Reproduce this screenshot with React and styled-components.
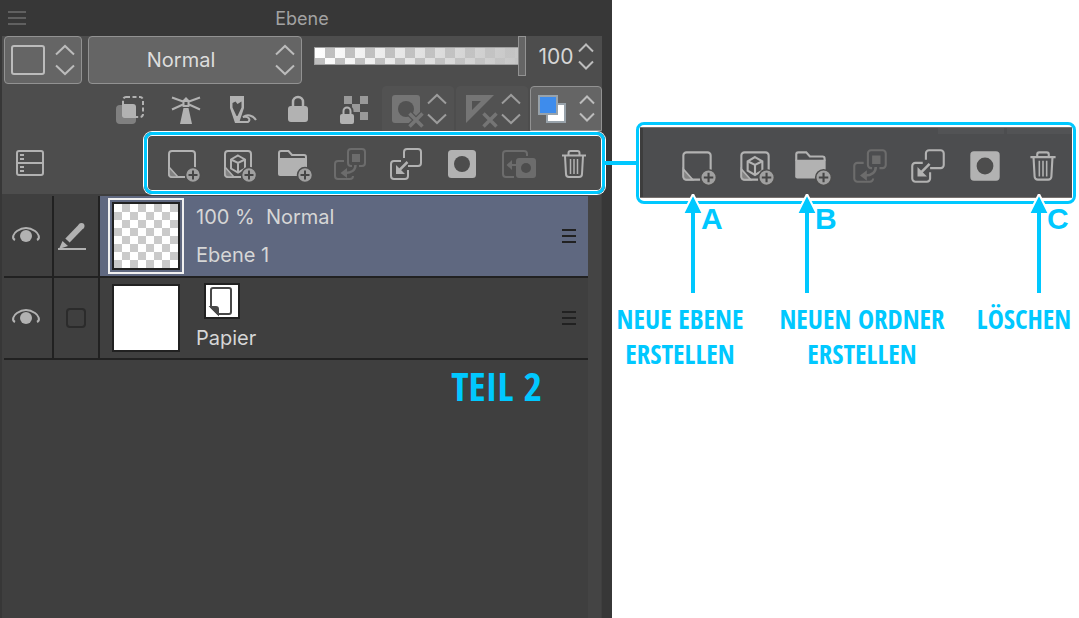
import styled, { createGlobalStyle, css } from 'styled-components';
import { useState } from 'react';

const cyan = '#00c8ff';
const iconLight = '#b2b2b2';
const iconDim = '#6c6c6c';
const iconOff = '#757575';
const toolbarBg = '#4d4d4d';

const GlobalStyle = createGlobalStyle`
    * {
        box-sizing: border-box;
    }
    body {
        margin: 0;
        background: #ffffff;
        font-family: Inter, "Liberation Sans", sans-serif;
    }
    button, select, input {
        font: inherit;
        color: inherit;
        margin: 0;
    }
`

const Page = styled.main`
    display: grid;
    grid-template-columns: minmax(0, 612fr) minmax(0, 467fr);
    min-height: 100vh;
`

/* ---------- layer panel ---------- */

const Panel = styled.section`
    display: flex;
    flex-direction: column;
    padding: 0 10px 0 2px;
    background: #373737;
    color: #d6d6d6;
`

const PanelHeader = styled.header`
    display: grid;
    grid-template-columns: 30px 1fr 30px;
    align-items: center;
    height: 36px;
`

const Title = styled.h1`
    margin: 0;
    font-size: 18px;
    font-weight: 400;
    text-align: center;
    color: #a2a2a2;
`

const PlainButton = styled.button`
    display: flex;
    align-items: center;
    justify-content: center;
    padding: 0;
    border: none;
    background: none;
`

const Toolbar = styled.div`
    background: ${toolbarBg};
`

const ControlRow = styled.div`
    display: flex;
    align-items: flex-start;
    gap: 6px;
    height: 50px;
    padding-left: 2px;
`

const raised = css`
    border: 1px solid #929292;
    border-radius: 4px;
    background: #656565;
`

const ShapeButton = styled.button`
    ${raised}
    display: flex;
    align-items: center;
    justify-content: space-between;
    width: 78px;
    height: 48px;
    padding: 0 6px;
`

const Swatch = styled.span`
    width: 34px;
    height: 30px;
    border: 2px solid #bcbcbc;
    border-radius: 3px;
`

const SelectBox = styled.label`
    position: relative;
    flex: 1;
    min-width: 120px;

    svg {
        position: absolute;
        top: 8px;
        right: 7px;
        pointer-events: none;
    }
`

const BlendSelect = styled.select`
    ${raised}
    appearance: none;
    display: block;
    width: 100%;
    height: 48px;
    padding: 0 28px 0 0;
    font-size: 20px;
    text-align: center;
    text-align-last: center;
    color: #dddddd;
`

const Opacity = styled.input`
    appearance: none;
    flex: none;
    width: 212px;
    height: 40px;
    margin-left: 6px;
    background: none;

    &::-webkit-slider-runnable-track {
        height: 18px;
        border: 1px solid #a0a0a0;
        border-right: none;
        background:
            linear-gradient(90deg, rgba(196, 196, 196, 0), #c4c4c4),
            conic-gradient(#bfbfbf 25%, #ffffff 0 50%, #bfbfbf 0 75%, #ffffff 0) 0 0 / 20px 20px;
    }

    &::-webkit-slider-thumb {
        appearance: none;
        width: 8px;
        height: 40px;
        margin-top: -12px;
        border: 1px solid #929292;
        background: #656565;
    }
`

const OpacityValue = styled.div`
    display: flex;
    align-items: center;
    gap: 2px;
    height: 40px;
    padding: 0 8px 0 4px;

    input {
        width: 40px;
        padding: 0;
        border: none;
        background: none;
        font-size: 21px;
        text-align: center;
    }
`

const ToolRow = styled.div`
    display: flex;
    justify-content: flex-end;
    align-items: center;
    height: 45px;
`

const Tool = styled(PlainButton)`
    width: 56px;
    height: 45px;
`

const ToolGroup = styled.button`
    display: flex;
    align-items: center;
    justify-content: space-between;
    width: 72px;
    height: 45px;
    margin-left: 2px;
    padding: 0 6px 0 3px;
    border: 1px solid #525252;
    border-radius: 4px 4px 0 0;
    background: #525252;

    ${({ $active }) => $active && css`
        border-color: #929292;
        background: #656565;
    `}
    &:nth-of-type(6) {
        margin-left: 0;
    }
`

const CommandRow = styled.div`
    display: flex;
    justify-content: space-between;
    align-items: center;
    height: 63px;
    padding: 1px 0 0 8px;
`

const Highlight = styled.div`
    position: relative;
    z-index: 1;
    display: flex;
    align-items: center;
    width: 461px;
    height: 62px;
    margin-right: -3px;
    padding: 2px 0 0 7px;
    border: 3px solid ${cyan};
    border-radius: 8px;
    box-shadow: 0 0 0 1px #ffffff, inset 0 0 0 1px #ffffff;

    /* line to the enlarged copy */
    &::after {
        content: '';
        position: absolute;
        top: 26px;
        left: 100%;
        width: 33px;
        height: 4px;
        margin-left: 3px;
        background: ${cyan};
    }
`

const Command = styled(PlainButton)`
    flex: 1;
    min-width: 0;
    height: 54px;
`

const ListArea = styled.div`
    flex: 1;
    display: flex;
`

const ScrollTrack = styled.div`
    width: 14px;
    background: #444444;
    border-right: 1px solid #3f3f3f;
`

const Layers = styled.div`
    flex: 1;
    min-width: 0;
    padding-top: 2px;
    background: #3f3f3f;
`

const LayerList = styled.ul`
    margin: 0 0 0 2px;
    padding: 0;
    list-style: none;
`

const Layer = styled.li`
    display: grid;
    grid-template-columns: 50px 46px 1fr;
    height: 82px;
    border-bottom: 2px solid #212121;
`

const Cell = styled.div`
    display: flex;
    align-items: center;
    justify-content: center;
    padding-right: 4px;
    border-right: 2px solid #212121;
`

const MarkCell = styled(Cell)`
    padding-right: 0;
`

const LayerBody = styled.div`
    display: flex;
    align-items: center;
    padding: 0 12px 0 8px;
    background: ${({ $selected }) => $selected ? '#5f6880' : 'none'};
`

const ThumbFrame = styled.div`
    padding: 2px;
    border: 2px solid ${({ $selected }) => $selected ? '#f0f0f0' : 'transparent'};
`

const Thumb = styled.div`
    width: 68px;
    height: 68px;
    border: 2px solid #212121;
    background: ${({ $transparent }) => $transparent
        ? 'conic-gradient(#cacaca 25%, #ffffff 0 50%, #cacaca 0 75%, #ffffff 0) 0 0 / 16px 16px'
        : '#ffffff'};
`

const LayerText = styled.div`
    flex: 1;
    padding-left: 12px;
    font-size: 20px;
    line-height: 38px;
    white-space: pre;
`

const PaperBadge = styled.div`
    display: flex;
    width: 36px;
    height: 36px;
    margin: 4px 0 0 8px;
    border: 2px solid #212121;
    background: #ffffff;
`

const LayerMark = styled.input`
    appearance: none;
    width: 20px;
    height: 20px;
    margin: 0;
    border: 2px solid #2b2b2b;
    border-radius: 4px;
`

const handwritten = css`
    margin: 0;
    color: ${cyan};
    font-family: "Open Sans Condensed", "Liberation Sans Narrow", "DejaVu Sans Condensed", sans-serif;
    font-weight: 700;
`

const PartLabel = styled.p`
    ${handwritten}
    padding: 4px 46px 0 0;
    font-size: 40px;
    line-height: 44px;
    text-align: right;
`

/* ---------- explanation ---------- */

const Notes = styled.section`
    padding: 122px 3px 0 24px;
`

const Callout = styled.div`
    padding: 2px 1px 3px 1px;
    border: 3px solid ${cyan};
    border-radius: 8px;
    background: #ffffff;
`

const CalloutBar = styled.div`
    display: flex;
    align-items: center;
    height: 71px;
    padding: 6px 0 0 28px;
    border: solid #77716f;
    border-width: 1px 0 1px 0;
    background:
        linear-gradient(#525355, #525355) right 68px top 0 / 66px 6px no-repeat,
        linear-gradient(#525355, #525355) right 0 top 0 / 65px 6px no-repeat,
        #4c4d4f;
    box-shadow: inset 3px 0 0 #3d3d3d;
`

const Arrows = styled.div`
    position: relative;
    display: grid;
    grid-template-columns: 114fr 232fr 48fr;
    margin-top: -10px;
    padding-left: 46px;
`

const Pointer = styled.div`
    display: flex;
    align-items: flex-start;
    color: ${cyan};
    font-family: "Liberation Sans", Arial, sans-serif;
    font-size: 30px;
    font-weight: 700;
    line-height: 30px;

    svg {
        flex: none;
    }
    span {
        margin: 10px 0 0 -3px;
    }
`

const Captions = styled.div`
    display: grid;
    grid-template-columns: 136fr 228fr 96fr;
    margin: 7px 4px 0 -24px;
`

const Caption = styled.p`
    ${handwritten}
    font-size: 27px;
    line-height: 35px;
    text-align: center;
    white-space: nowrap;
`

/* ---------- icons ---------- */

function Icon({ children, size = 40, color = iconLight }) {
    return (
        <svg width={size} height={size} viewBox="0 0 40 40" fill="none" stroke={color} strokeWidth="2" aria-hidden="true">
            {children}
        </svg>
    )
}

function Chevrons({ small, color = '#bcbcbc' }) {
    return (
        <svg width={small ? 16 : 20} height={small ? 29 : 32} viewBox={small ? '0 0 16 29' : '0 0 20 32'} fill="none" stroke={color} strokeWidth="2" aria-hidden="true">
            {small
                ? <path d="M1 9.5l7-7 7 7M1 19.5l7 7 7-7" />
                : <path d="M1 10.5l9-8.5 9 8.5M1 21.5l9 8.5 9-8.5" />}
        </svg>
    )
}

function Bars({ color, width = 14, height = 14 }) {
    const mid = height / 2
    return (
        <svg width={width} height={height} fill="none" stroke={color} strokeWidth="2" aria-hidden="true">
            <path d={`M0 1h${width}M0 ${mid}h${width}M0 ${height - 1}h${width}`} />
        </svg>
    )
}

const Plus = () => (
    <g>
        <circle cx="31" cy="31" r="7.5" fill="#a0a0a0" stroke={toolbarBg} strokeWidth="1.5" />
        <path d="M26.5 31h9M31 26.5v9" stroke="#454545" strokeWidth="2" />
    </g>
)

const Sheet = () => (
    <g>
        <path d="M33 24V10a3 3 0 0 0-3-3H10a3 3 0 0 0-3 3v20a3 3 0 0 0 3 3h13" />
        <path d="M7 23l9 10h-6a3 3 0 0 1-3-3z" fill="#828282" strokeWidth="1.5" />
    </g>
)

const Cross = () => (
    <g>
        <path d="M24 25l12 12M36 25L24 37" stroke="#525252" strokeWidth="6" />
        <path d="M23.5 24.5l13 13M36.5 24.5l-13 13" strokeWidth="3.5" />
    </g>
)

const Trash = () => (
    <g>
        <path d="M8 11.5h24M14.5 11V9a2 2 0 0 1 2-2h7a2 2 0 0 1 2 2v2M11 12l1 18a3 3 0 0 0 3 3h10a3 3 0 0 0 3-3l1-18" />
        <path d="M16.5 15v15M20 15v15M23.5 15v15" strokeWidth="1.5" />
    </g>
)

const commands = [
    { name: 'Neue Ebene', art: <><Sheet /><Plus /></> },
    {
        name: 'Neue 3D-Ebene',
        art: <>
            <Sheet />
            <path d="M20 11.5l7 4v9l-7 4-7-4v-9z" fill={toolbarBg} />
            <path d="M13 15.5l7 3.5 7-3.5M20 19v9" />
            <Plus />
        </>
    },
    {
        name: 'Neuer Ordner',
        art: <>
            <path d="M5 15V9a2 2 0 0 1 2-2h7.5l3.500 4h12a2 2 0 0 1 2 2v2" />
            <path d="M4 14h29v16a2 2 0 0 1-2 2H6a2 2 0 0 1-2-2z" fill={iconLight} stroke="none" />
            <Plus />
        </>
    },
    {
        name: 'Auf Ebene darunter übertragen',
        dim: true,
        art: <>
            <path d="M18 15V8a3 3 0 0 1 3-3h11a3 3 0 0 1 3 3v11a3 3 0 0 1-3 3h-3M18 14v5a3 3 0 0 0 3 3h1" />
            <path d="M14 17H8a3 3 0 0 0-3 3v12a3 3 0 0 0 3 3h12a3 3 0 0 0 3-3" />
            <path d="M22 10h8v8h-8zM10.5 29l6.500-5v10z" fill={iconDim} stroke="none" />
            <path d="M25.5 21c0 5-4 8-10 8" strokeWidth="2.5" />
        </>
    },
    {
        name: 'Mit Ebene darunter kombinieren',
        art: <>
            <path d="M18 14V8a3 3 0 0 1 3-3h11a3 3 0 0 1 3 3v11a3 3 0 0 1-3 3H22" />
            <path d="M15 17H8a3 3 0 0 0-3 3v12a3 3 0 0 0 3 3h11a3 3 0 0 0 3-3v-6" />
            <path d="M21.5 18L13 26.5" strokeWidth="2.5" />
            <path d="M10 21v9h9z" fill={iconLight} stroke="none" />
        </>
    },
    {
        name: 'Ebenenmaske',
        art: <>
            <rect x="6" y="6" width="28" height="28" rx="3.5" fill={iconLight} stroke="none" />
            <circle cx="20" cy="20" r="8" fill={toolbarBg} stroke="none" />
        </>
    },
    {
        name: 'Maske anwenden',
        dim: true,
        art: <>
            <path d="M29 12v-2a3 3 0 0 0-3-3H8a3 3 0 0 0-3 3v20a3 3 0 0 0 3 3h8M11 21h7" />
            <path d="M8.5 21l5.500-5v10z" fill={iconDim} stroke="none" />
            <rect x="18" y="14" width="20" height="20" rx="3" fill={iconDim} stroke="none" />
            <circle cx="28" cy="24" r="5" fill={toolbarBg} stroke="none" />
        </>
    },
    { name: 'Löschen', art: <Trash /> },
]

const tools = [
    {
        name: 'Clipping',
        art: <>
            <rect x="6" y="16" width="20" height="19" rx="4" fill="#808080" stroke="none" />
            <path d="M12 15h11a3 3 0 0 1 3 3v11H15a3 3 0 0 1-3-3z" fill={iconLight} stroke="none" />
            <rect x="13" y="8" width="20" height="20" rx="3" strokeDasharray="4 2.5" />
        </>
    },
    {
        name: 'Referenzebene',
        art: <>
            <path d="M6 8.5l11 4M6 20.5l11-5M34 8.5l-11 4M34 20.5l-11-5" />
            <path d="M17.5 12h5v5h-5z" />
            <path d="M17 11l3-3 3 3zM17.5 19h5L26 35H14z" fill={iconLight} stroke="none" />
        </>
    },
    {
        name: 'Entwurfsebene',
        art: <>
            <path d="M8 7h14v12l-5 15h-4L8 19z" fill={iconLight} stroke="none" />
            <path d="M10.5 14l3-1.500 2 2.500 4-2.500v6L15.500 27h-1l-4-8.500z" fill={toolbarBg} stroke="none" />
            <path d="M16 33h10c3-2 1-6-5-5 4-3 10-2 13 3" />
        </>
    },
    {
        name: 'Ebene sperren',
        art: <>
            <rect x="10" y="17" width="20" height="16" rx="3" fill={iconLight} stroke="none" />
            <path d="M15 18v-5a5 5 0 0 1 10 0v5" strokeWidth="2.5" />
        </>
    },
    {
        name: 'Transparente Pixel sperren',
        art: <>
            <path d="M10 7h8v8h-8zM26 7h8v8h-8zM18 15h8v8h-8zM26 23h8v8h-8z" fill="#999999" stroke="none" />
            <rect x="5" y="24" width="16" height="12" rx="3" fill={toolbarBg} stroke="none" />
            <path d="M9 26v-4a4 4 0 0 1 8 0v4" stroke={toolbarBg} strokeWidth="5" />
            <rect x="6" y="25" width="14" height="10" rx="2" fill={iconLight} stroke="none" />
            <path d="M9.5 26v-4a3.500 3.500 0 0 1 7 0v4" />
        </>
    },
]

const layers = [
    { id: 'ebene-1', name: 'Ebene 1', info: '100 %  Normal', selected: true },
    { id: 'papier', name: 'Papier' },
]

const pointers = ['A', 'B', 'C']

function EyeIcon() {
    return (
        <Icon>
            <path d="M9 24C5 22 8 17 11 15c6-4 12-4 18 0 3 2 6 7 2 9" />
            <circle cx="20" cy="20" r="6" fill={iconLight} stroke="none" />
        </Icon>
    )
}

function LayerRow({ layer }) {
    return (
        <Layer>
            <Cell>
                <PlainButton aria-label={`${layer.name} anzeigen`}><EyeIcon /></PlainButton>
            </Cell>
            <MarkCell>
                {layer.selected
                    ? <Icon>
                        <path d="M25.5 10L11.5 24.5" stroke={iconLight} strokeWidth="6" />
                        <circle cx="25.5" cy="10" r="3" fill={iconLight} stroke="none" />
                        <path d="M6.5 25l5.500 5-9 3z" fill={iconLight} stroke="none" />
                        <path d="M7 23.5l6.500 6" stroke="#3f3f3f" strokeWidth="1" />
                        <path d="M2 33h28" />
                    </Icon>
                    : <LayerMark type="checkbox" aria-label={`${layer.name} auswählen`} />}
            </MarkCell>
            <LayerBody $selected={layer.selected}>
                <ThumbFrame $selected={layer.selected}>
                    <Thumb $transparent={layer.selected} />
                </ThumbFrame>
                <LayerText>
                    {layer.info
                        ? <div>{layer.info}</div>
                        : <PaperBadge>
                            <svg width="32" height="32" viewBox="0 0 32 32" fill="none" stroke="#484848" strokeWidth="2" aria-hidden="true">
                                <path d="M5 22V5a2 2 0 0 1 2-2h16a2 2 0 0 1 2 2v22a2 2 0 0 1-2 2H12z" />
                                <path d="M5 22h5a2 2 0 0 1 2 2v5z" fill="#484848" />
                            </svg>
                        </PaperBadge>}
                    <div>{layer.name}</div>
                </LayerText>
                <PlainButton aria-label={`Menü ${layer.name}`}>
                    <Bars color="#212121" />
                </PlainButton>
            </LayerBody>
        </Layer>
    )
}

function CommandButton({ command, size }) {
    return (
        <Command aria-label={command.name} disabled={command.dim}>
            <Icon size={size} color={command.dim ? iconDim : iconLight}>{command.art}</Icon>
        </Command>
    )
}

export default function App() {
    const [mode, setMode] = useState('Normal')
    const [opacity, setOpacity] = useState(100)

    const changeOpacity = (e) => {
        setOpacity(e.target.value)
    }

    return (
        <Page>
            <GlobalStyle />
            <Panel>
                <PanelHeader>
                    <PlainButton aria-label="Menü"><Bars color="#606060" width={18} height={14} /></PlainButton>
                    <Title>Ebene</Title>
                </PanelHeader>

                <Toolbar>
                    <ControlRow>
                        <ShapeButton aria-label="Palettenfarbe">
                            <Swatch />
                            <Chevrons />
                        </ShapeButton>
                        <SelectBox>
                            <BlendSelect aria-label="Füllmethode" value={mode} onChange={(e) => setMode(e.target.value)}>
                                <option>Normal</option>
                            </BlendSelect>
                            <Chevrons />
                        </SelectBox>
                        <Opacity type="range" min="0" max="100" aria-label="Deckkraft" value={opacity} onChange={changeOpacity} />
                        <OpacityValue>
                            <input type="text" aria-label="Deckkraft in Prozent" value={opacity} onChange={changeOpacity} />
                            <Chevrons small />
                        </OpacityValue>
                    </ControlRow>

                    <ToolRow>
                        {tools.map((tool) => (
                            <Tool key={tool.name} aria-label={tool.name}>
                                <Icon>{tool.art}</Icon>
                            </Tool>
                        ))}
                        <ToolGroup aria-label="Maske aktivieren">
                            <Icon color={iconOff}>
                                <rect x="6" y="6" width="28" height="28" rx="3" fill={iconOff} stroke="none" />
                                <circle cx="20" cy="20" r="8" fill="#525252" stroke="none" />
                                <Cross />
                            </Icon>
                            <Chevrons color="#9c9c9c" />
                        </ToolGroup>
                        <ToolGroup aria-label="Linealbereich">
                            <Icon color={iconOff}>
                                <path d="M6 6h28L6 34zM12 12v9l9-9z" fill={iconOff} fillRule="evenodd" stroke="none" />
                                <Cross />
                            </Icon>
                            <Chevrons color="#9c9c9c" />
                        </ToolGroup>
                        <ToolGroup $active aria-label="Ebenenfarbe">
                            <Icon color="#98a2aa">
                                <rect x="13" y="15" width="18" height="18" fill="#ffffff" />
                                <rect x="5" y="7" width="18" height="18" fill="#3e8cec" />
                            </Icon>
                            <Chevrons small />
                        </ToolGroup>
                    </ToolRow>

                    <CommandRow>
                        <PlainButton aria-label="Zweigeteilte Ansicht">
                            <Icon>
                                <rect x="7" y="8" width="26" height="24" rx="2" />
                                <path d="M7 20h26M10 12h4M10 16h4M10 24h4M10 28h4" />
                            </Icon>
                        </PlainButton>
                        <Highlight>
                            {commands.map((command) => (
                                <CommandButton key={command.name} command={command} size={40} />
                            ))}
                        </Highlight>
                    </CommandRow>
                </Toolbar>

                <ListArea>
                    <Layers>
                        <LayerList>
                            {layers.map((layer) => <LayerRow key={layer.id} layer={layer} />)}
                        </LayerList>
                        <PartLabel>TEIL 2</PartLabel>
                    </Layers>
                    <ScrollTrack />
                </ListArea>
            </Panel>

            <Notes>
                <Callout>
                    <CalloutBar>
                        {commands.filter((command) => command.name !== 'Maske anwenden').map((command) => (
                            <CommandButton key={command.name} command={command} size={42} />
                        ))}
                    </CalloutBar>
                </Callout>
                <Arrows>
                    {pointers.map((letter) => (
                        <Pointer key={letter}>
                            <svg width="22" height="100" viewBox="0 0 22 100" aria-hidden="true">
                                <path d="M11 0l10 20H1z" fill={cyan} stroke="#ffffff" strokeWidth="2" />
                                <path d="M9 19h4v80H9z" fill={cyan} />
                            </svg>
                            <span>{letter}</span>
                        </Pointer>
                    ))}
                </Arrows>
                <Captions>
                    <Caption>NEUE EBENE<br />ERSTELLEN</Caption>
                    <Caption>NEUEN ORDNER<br />ERSTELLEN</Caption>
                    <Caption>LÖSCHEN</Caption>
                </Captions>
            </Notes>
        </Page>
    )
}
